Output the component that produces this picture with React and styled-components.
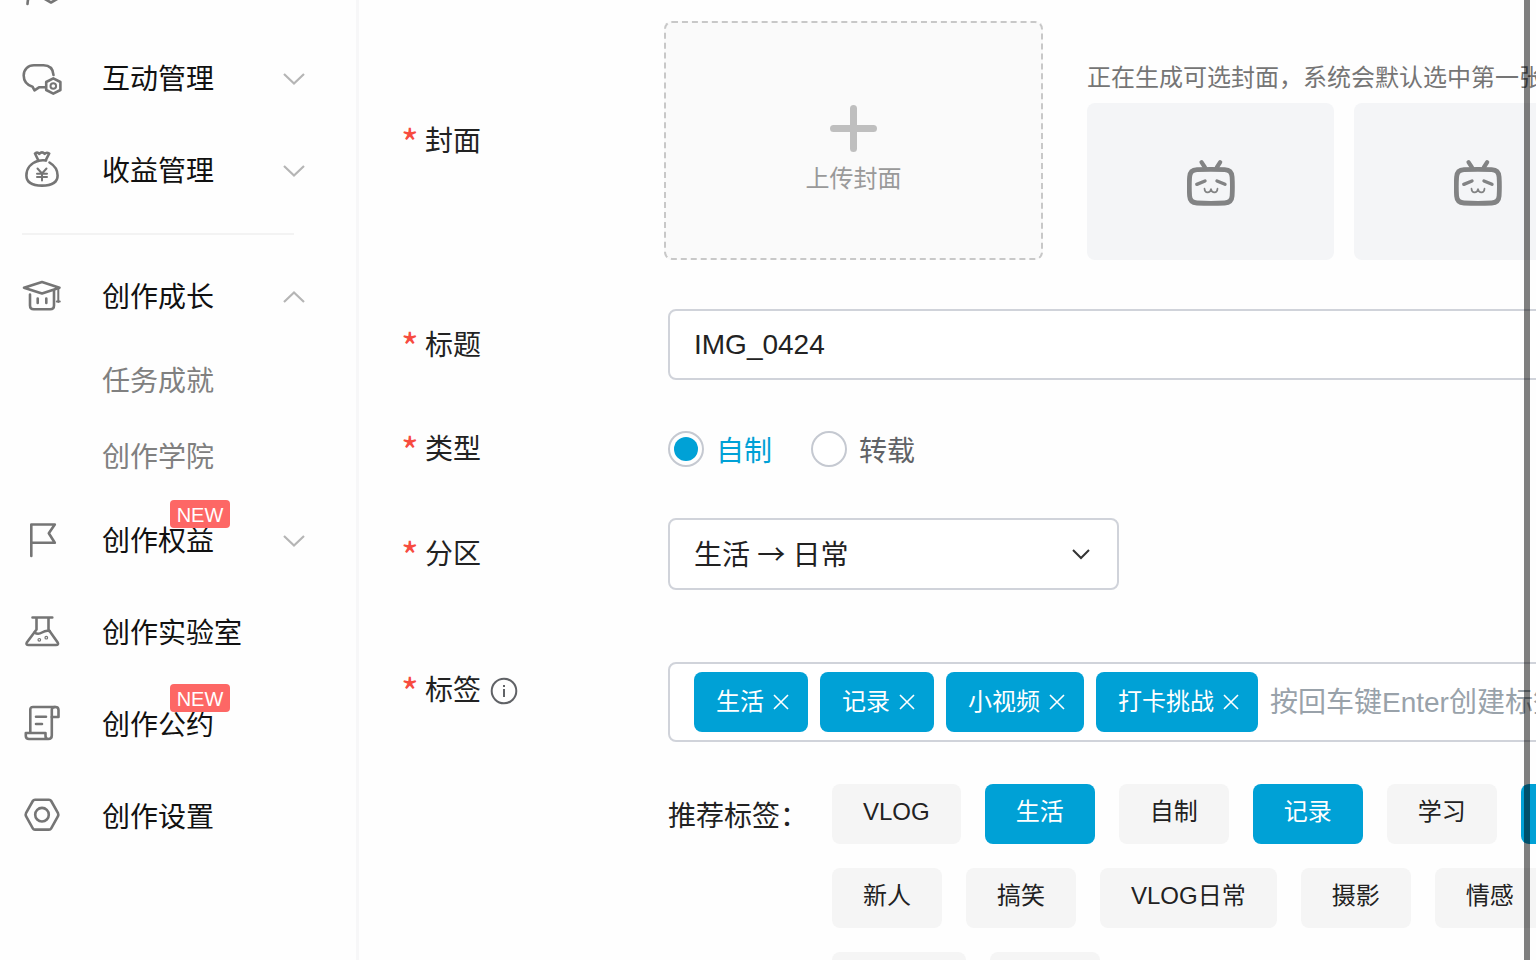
import { useState } from "react";
import styled, { createGlobalStyle } from "styled-components";

const menu = [
  { label: "粉丝管理", icon: "fans", arrow: "down" },
  { label: "互动管理", icon: "interact", arrow: "down" },
  { label: "收益管理", icon: "income", arrow: "down" },
  { divider: true },
  {
    label: "创作成长",
    icon: "growth",
    arrow: "up",
    children: ["任务成就", "创作学院"],
  },
  { label: "创作权益", icon: "rights", arrow: "down", isNew: true },
  { label: "创作实验室", icon: "lab" },
  { label: "创作公约", icon: "pact", isNew: true },
  { label: "创作设置", icon: "settings" },
];

const recommended = [
  "VLOG",
  "生活",
  "自制",
  "记录",
  "学习",
  "小视频",
  "新人",
  "搞笑",
  "VLOG日常",
  "摄影",
  "情感",
  "小剧场",
  "旅行",
];

export default function App() {
  const [title, setTitle] = useState("IMG_0424");
  const [type, setType] = useState("self");
  const [tags, setTags] = useState(["生活", "记录", "小视频", "打卡挑战"]);

  function toggleTag(tag) {
    setTags(
      tags.includes(tag) ? tags.filter((item) => item !== tag) : [...tags, tag]
    );
  }

  return (
    <>
      <GlobalStyle />
      <Page>
        <Sidebar />
        <Form onSubmit={(event) => event.preventDefault()}>
          <Row $label={263}>
            <Label as="span">
              <Star>*</Star>封面
            </Label>
            <Covers>
              <Upload type="button">
                <PlusIcon />
                上传封面
              </Upload>
              <Suggestions>
                <Hint>正在生成可选封面，系统会默认选中第一张</Hint>
                <Thumbs>
                  <Thumb>
                    <TvIcon />
                  </Thumb>
                  <Thumb>
                    <TvIcon />
                  </Thumb>
                </Thumbs>
              </Suggestions>
            </Covers>
          </Row>

          <Row $top={49}>
            <Label htmlFor="title">
              <Star>*</Star>标题
            </Label>
            <TextInput
              id="title"
              value={title}
              onChange={(event) => setTitle(event.target.value)}
            />
          </Row>

          <Row $top={33}>
            <Label as="span">
              <Star>*</Star>类型
            </Label>
            <Radios>
              <RadioLabel $checked={type === "self"}>
                <Radio
                  type="radio"
                  name="type"
                  checked={type === "self"}
                  onChange={() => setType("self")}
                />
                自制
              </RadioLabel>
              <RadioLabel $checked={type === "repost"}>
                <Radio
                  type="radio"
                  name="type"
                  checked={type === "repost"}
                  onChange={() => setType("repost")}
                />
                转载
              </RadioLabel>
            </Radios>
          </Row>

          <Row $top={34}>
            <Label htmlFor="zone">
              <Star>*</Star>分区
            </Label>
            <SelectBox>
              <Select id="zone" defaultValue="daily">
                <option value="daily">生活 → 日常</option>
              </Select>
              <SelectArrow width="20" height="12" viewBox="0 0 20 12">
                <path d="M2 2l8 8 8-8" />
              </SelectArrow>
            </SelectBox>
          </Row>

          <Row $top={72} $align="start">
            <Label htmlFor="tags">
              <Star>*</Star>标签
              <InfoIcon />
            </Label>
            <TagBox>
              {tags.map((tag) => (
                <Tag key={tag}>
                  {tag}
                  <Remove
                    type="button"
                    aria-label={`删除${tag}`}
                    onClick={() => toggleTag(tag)}
                  >
                    <svg width="16" height="16" viewBox="0 0 16 16">
                      <path d="M1 1l14 14M15 1L1 15" />
                    </svg>
                  </Remove>
                </Tag>
              ))}
              <TagInput id="tags" placeholder="按回车键Enter创建标签" />
            </TagBox>
          </Row>

          <Row $top={42} $align="start">
            <span />
            <Recommend>
              <RecommendTitle>推荐标签：</RecommendTitle>
              <Chips>
                {recommended.map((tag) => (
                  <Chip
                    key={tag}
                    type="button"
                    $active={tags.includes(tag)}
                    onClick={() => toggleTag(tag)}
                  >
                    {tag}
                  </Chip>
                ))}
              </Chips>
            </Recommend>
          </Row>
        </Form>
        <EdgeBar />
      </Page>
    </>
  );
}

function Sidebar() {
  return (
    <Aside>
      <Menu>
        {menu.map((item, index) => {
          if (item.divider) return <Divider key={index} />;
          return (
            <div key={item.label}>
              <MenuItem
                as={item.arrow ? "button" : "a"}
                href={item.arrow ? undefined : "#"}
              >
                <MenuIcon name={item.icon} />
                <MenuText>{item.label}</MenuText>
                {item.arrow && (
                  <Arrow
                    width="22"
                    height="14"
                    viewBox="0 0 22 14"
                    $up={item.arrow === "up"}
                  >
                    <path d="M1 2l10 9.500 10-9.500" />
                  </Arrow>
                )}
                {item.isNew && <NewBadge>NEW</NewBadge>}
              </MenuItem>
              {item.children?.map((child) => (
                <SubItem key={child} href="#">
                  {child}
                </SubItem>
              ))}
            </div>
          );
        })}
      </Menu>
    </Aside>
  );
}

const iconShapes = {
  fans: (
    <>
      <circle cx="17" cy="11" r="8" />
      <path d="M5.5 37C6 28 10 22 18 22" />
      <path d="M29 20.5l6.5 3.8v7.5L29 35.5l-6.5-3.7v-7.5z" />
      <circle cx="29" cy="28" r="2.4" />
    </>
  ),
  interact: (
    <>
      <path d="M31.5 16C31 9.5 27.5 6.3 21.5 6.3H12C6 6.3 1.7 10.5 1.7 16.5 1.7 22.5 5 26 10.5 27.7L12.5 31.3 17 28.3H23.5" />
      <path d="M31.3 19.3l7.1 3.7v8l-7.1 3.7-7.1-3.7v-8z" />
      <circle cx="31.3" cy="27" r="2.8" strokeWidth="2" />
    </>
  ),
  income: (
    <>
      <path d="M16.5 9.8L13 2.5Q15.5 .8 17.3 2.8 20 0 22.7 2.8 24.5 .8 27.2 2.5L23.8 9.2" />
      <path d="M24 9.5Q20 9 16.5 9.8C8.5 12 4.4 18 4.4 24.5 4.4 31 10 34.6 20 34.6S35.6 31 35.6 24.5C35.6 19.5 32.5 14.5 27.5 11.5" />
      <path
        d="M15.5 17.5L20 22.5 24.5 17.5M20 22.5V29.5M15 22.7H25M15 26H25"
        strokeWidth="2"
      />
    </>
  ),
  growth: (
    <>
      <path d="M20 5L37.5 10.7 20 16.5 2 10.7z" />
      <path d="M8 17.5V28.5Q8 32.3 11.8 32.3H28.2Q32 32.3 32 28.5V13.5" />
      <path d="M15.7 21.5V26M24.3 21.5V26" />
      <path d="M36.3 12V25M34.8 24.5H37.8" strokeWidth="2" />
    </>
  ),
  rights: <path d="M9.3 35V3.5H32.8L26.8 12.3 32.8 21.8H9.3" />,
  lab: (
    <>
      <path d="M10.5 4.5H30.3M14.5 5V16.5L4.8 29.5Q3.6 32 6.5 32H34Q37 32 35.7 29.5L26.5 16.5V5" />
      <path d="M12.5 19.5Q16 22 20 19.5T27.5 18" />
      <circle cx="17.3" cy="26.8" r=".6" />
      <circle cx="24.3" cy="24.7" r=".6" />
    </>
  ),
  pact: (
    <>
      <path d="M8.3 27V4.5Q8.3 2 11 2H33.5Q36.5 2 36.5 5V12H29.8V30.5Q29.8 34 26.3 34H7Q3.8 34 3.8 31V28H23.5V31Q23.5 34 26.3 34" />
      <path d="M29.8 12V5Q29.8 2 33 2M14 11.7H24M14 19H20" />
    </>
  ),
  settings: (
    <>
      <path d="M13 2.8H27Q28.5 2.8 29.2 4L36 16.2Q36.7 17.7 36 19.2L29.2 31.4Q28.5 32.6 27 32.6H13Q11.5 32.6 10.8 31.4L4 19.2Q3.3 17.7 4 16.2L10.8 4Q11.5 2.8 13 2.8z" />
      <circle cx="20" cy="17.7" r="6.8" />
    </>
  ),
};

function MenuIcon({ name }) {
  return (
    <LineIcon width="40" height="40" viewBox="0 0 40 40">
      {iconShapes[name]}
    </LineIcon>
  );
}

function PlusIcon() {
  return (
    <svg width="47" height="47" viewBox="0 0 47 47" stroke="#bfbfbf">
      <path
        d="M23.5 3.5v40M3.5 23.5h40"
        strokeWidth="7"
        strokeLinecap="round"
      />
    </svg>
  );
}

function TvIcon() {
  return (
    <svg
      width="48"
      height="52"
      viewBox="0 -4 48 52"
      fill="none"
      stroke="#828384"
      strokeLinecap="round"
      strokeLinejoin="round"
    >
      <path
        d="M10 9.7Q24 9.1 37.7 9.7 44.7 10 45.1 17 45.7 26.5 45.1 36 44.7 42.5 37.7 43 24 43.9 10 43 3 42.5 2.6 36 2 26.5 2.6 17 3 10 10 9.7z"
        strokeWidth="4.8"
      />
      <path d="M14.5 2.2L18 7.5M33.2 2.2L29.8 7.5" strokeWidth="4.2" />
      <path d="M9.8 24.3L18 21M30 21L38 24.3" strokeWidth="3.4" />
      <path
        d="M17.5 28.7C17.8 33.5 23 33.5 24 29.2 25 33.5 30.2 33.5 30.5 28.7"
        strokeWidth="1.7"
      />
    </svg>
  );
}

function InfoIcon() {
  return (
    <svg
      width="28"
      height="28"
      viewBox="0 0 28 28"
      fill="none"
      stroke="#606266"
      strokeWidth="2"
    >
      <circle cx="14" cy="14" r="12.3" />
      <path d="M14 12v8M14 8v2" />
    </svg>
  );
}

const GlobalStyle = createGlobalStyle`
  * {
    box-sizing: border-box;
  }

  body {
    margin: 0;
    overflow: hidden;
    background-color: #fefefe;
    color: #222;
    font-family: "Liberation Sans", "Noto Sans CJK SC", sans-serif;
    font-size: 28px;
  }

  button,
  input,
  select {
    font: inherit;
    color: inherit;
  }

  button {
    cursor: pointer;
  }

  svg {
    display: block;
    flex: none;
  }
`;

const Page = styled.div`
  display: flex;
  height: 100vh;
  overflow: hidden;
`;

const Aside = styled.aside`
  flex: none;
  width: 359px;
  border-right: 3px solid #f7f7f8;
  overflow: hidden;
`;

/* the menu is scrolled a little way down */
const Menu = styled.nav`
  margin-top: -59px;
`;

const MenuItem = styled.a`
  position: relative;
  display: flex;
  align-items: center;
  width: 100%;
  height: 92px;
  padding: 0 51px 0 22px;
  border: none;
  background: none;
  color: #111;
  text-align: left;
  text-decoration: none;
`;

const MenuText = styled.span`
  flex: 1;
  margin-left: 40px;
  padding-top: 2px;
  line-height: 40px;
`;

const SubItem = styled.a`
  display: block;
  height: 76px;
  padding: 1px 0 0 102px;
  color: #808080;
  line-height: 76px;
  text-decoration: none;
`;

const Divider = styled.hr`
  height: 2px;
  margin: 16px 62px 16px 22px;
  border: none;
  background-color: #f3f3f3;
`;

const NewBadge = styled.span`
  position: absolute;
  top: 5px;
  left: 170px;
  width: 60px;
  height: 28px;
  border-radius: 4px;
  background-color: #fd6765;
  color: white;
  font-size: 20px;
  line-height: 30px;
  text-align: center;
`;

const LineIcon = styled.svg`
  fill: none;
  stroke: #757575;
  stroke-width: 2.6;
  stroke-linecap: round;
  stroke-linejoin: round;
`;

const Arrow = styled.svg`
  fill: none;
  stroke: #b5b5b5;
  stroke-width: 2.2;
  transform: ${({ $up }) => ($up ? "rotate(180deg)" : "none")};
`;

const Form = styled.form`
  flex: 1 0 1331px;
  padding: 21px 0 0 42px;
`;

const Row = styled.div`
  display: grid;
  grid-template-columns: ${({ $label = 267 }) => $label}px 1fr;
  align-items: ${({ $align = "center" }) => $align};
  min-height: 71px;
  margin-top: ${({ $top = 0 }) => $top}px;
`;

const Label = styled.label`
  display: flex;
  align-items: center;
  padding-top: 2px;
  line-height: 54px;

  svg {
    margin-left: 9px;
  }
`;

const Star = styled.span`
  width: 24px;
  color: #f74b3f;
  font-family: "Noto Sans CJK SC", sans-serif;
  font-size: 38px;
`;

const Covers = styled.div`
  display: flex;
  gap: 44px;
`;

const Upload = styled.button`
  display: flex;
  flex: none;
  flex-direction: column;
  align-items: center;
  justify-content: center;
  gap: 9px;
  width: 379px;
  height: 239px;
  padding: 20px 0 0;
  border: 2px dashed #c8c8c8;
  border-radius: 8px;
  background-color: #fafafa;
  color: #999;
  font-size: 24px;
  line-height: 36px;
`;

const Suggestions = styled.div`
  display: flex;
  flex-direction: column;
  justify-content: flex-end;
`;

const Hint = styled.p`
  margin: 0 0 8px;
  color: #757575;
  font-size: 24px;
  line-height: 34px;
  white-space: nowrap;
`;

const Thumbs = styled.div`
  display: flex;
  gap: 20px;
`;

const Thumb = styled.div`
  display: flex;
  align-items: center;
  justify-content: center;
  width: 247px;
  height: 157px;
  border-radius: 8px;
  background-color: #f4f5f7;
`;

const TextInput = styled.input`
  width: 100%;
  height: 71px;
  padding: 0 24px;
  border: 2px solid #d0d3da;
  border-radius: 8px;
  background-color: white;
`;

const Radios = styled.div`
  display: flex;
  gap: 39px;
`;

const RadioLabel = styled.label`
  display: flex;
  align-items: center;
  gap: 12px;
  color: ${({ $checked }) => ($checked ? "#00a1d6" : "#606266")};
`;

const Radio = styled.input`
  appearance: none;
  width: 36px;
  height: 36px;
  margin: 0;
  padding: 4px;
  border: 2px solid #c5c9d1;
  border-radius: 50%;
  background-color: white;

  &:checked {
    background-color: #00a1d6;
    background-clip: content-box;
  }
`;

const SelectBox = styled.div`
  position: relative;
  width: 451px;
`;

const Select = styled.select`
  display: block;
  appearance: none;
  width: 100%;
  height: 72px;
  padding: 0 24px;
  border: 2px solid #d0d3da;
  border-radius: 8px;
  background-color: white;
  font-family: "Open Sans", "Noto Sans CJK SC", sans-serif;
`;

const SelectArrow = styled.svg`
  position: absolute;
  top: 30px;
  right: 28px;
  fill: none;
  stroke: #333;
  stroke-width: 2;
  pointer-events: none;
`;

const TagBox = styled.div`
  display: flex;
  align-items: center;
  gap: 12px;
  height: 80px;
  padding: 0 24px;
  border: 2px solid #d0d3da;
  border-radius: 8px;
  background-color: white;
`;

const Tag = styled.span`
  display: flex;
  flex: none;
  align-items: center;
  gap: 9px;
  height: 60px;
  padding: 0 19px 0 22px;
  border-radius: 8px;
  background-color: #00a1d6;
  color: white;
  font-size: 24px;
  line-height: 60px;
`;

const Remove = styled.button`
  padding: 0;
  border: none;
  background: none;

  svg {
    stroke: white;
    stroke-width: 1.6;
  }
`;

const TagInput = styled.input`
  flex: 1;
  min-width: 0;
  height: 60px;
  padding: 2px 0 0;
  border: none;
  background: none;
  outline: none;

  &::placeholder {
    color: #99a2aa;
  }
`;

const Recommend = styled.div`
  display: flex;
`;

const RecommendTitle = styled.span`
  flex: none;
  width: 164px;
  line-height: 66px;
`;

const Chips = styled.div`
  display: flex;
  flex-wrap: wrap;
  gap: 24px;
`;

const Chip = styled.button`
  height: 60px;
  padding: 0 31px 4px;
  border: none;
  border-radius: 8px;
  background-color: ${({ $active }) => ($active ? "#00a1d6" : "#f5f5f5")};
  color: ${({ $active }) => ($active ? "white" : "#222")};
  font-size: 24px;
  line-height: 56px;
`;

/* dark strip that lies over the right edge of the page */
const EdgeBar = styled.div`
  position: fixed;
  top: 0;
  right: 6px;
  bottom: 0;
  width: 6px;
  background-color: rgba(0, 0, 0, 0.5);
`;
